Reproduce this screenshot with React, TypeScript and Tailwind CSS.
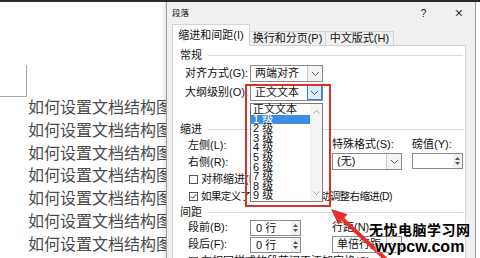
import React from "react"

const lines = Array.from({ length: 7 }, () => "如何设置文档结构图")
const levels = ["2 级", "3 级", "4 级", "5 级", "6 级", "7 级", "8 级", "9 级"]

function Chevron({ color = "#555" }: { color?: string }) {
  return (
    <svg width="9" height="6" viewBox="0 0 9 6">
      <path d="M1 1l3.5 3.5L8 1" fill="none" stroke={color} strokeWidth="1" />
    </svg>
  )
}

function Select({ text, w, focused }: { text: string; w: string; focused?: boolean }) {
  return (
    <div className={`flex h-[17px] ${w} items-stretch border border-[#8a8a8a] bg-white`}>
      <span className="flex-1 pl-[4px] leading-[15px]">{text}</span>
      <span
        className={
          focused
            ? "flex w-[15px] items-center justify-center border border-[#2f7fd0] bg-[#dcecfc]"
            : "flex w-[15px] items-center justify-center border-l border-[#c8c8c8] bg-[#f4f4f4]"
        }
      >
        <Chevron color={focused ? "#2a5f9e" : "#555"} />
      </span>
    </div>
  )
}

function Spin({ text, w }: { text: string; w: string }) {
  return (
    <div className={`flex h-[16px] ${w} items-stretch border border-[#8a8a8a] bg-white`}>
      <span className="flex-1 pl-[5px] leading-[14px]">{text}</span>
      <span className="flex w-[9px] flex-col items-center justify-center gap-[2px] bg-[#f0f0f0]">
        <svg width="5" height="3" viewBox="0 0 5 3">
          <path d="M0 3L2.5 0L5 3Z" fill="#555" />
        </svg>
        <svg width="5" height="3" viewBox="0 0 5 3">
          <path d="M0 0L2.5 3L5 0Z" fill="#555" />
        </svg>
      </span>
    </div>
  )
}

function Check({ checked }: { checked?: boolean }) {
  return (
    <span className="mr-[3px] flex h-[9px] w-[9px] items-center justify-center border border-[#555] bg-white">
      {checked && (
        <svg width="8" height="7" viewBox="0 0 8 7">
          <path d="M1 3.5L3 5.5L7 1" fill="none" stroke="#222" strokeWidth="1.1" />
        </svg>
      )}
    </span>
  )
}

function Group({ title, h }: { title: string; h: string }) {
  return (
    <div className={`flex ${h} items-center pl-[7px] pr-[2px]`}>
      <span>{title}</span>
      <span className="ml-[6px] h-px flex-1 bg-[#dcdcdc]" />
    </div>
  )
}

export default function App() {
  return (
    <div className="relative h-[258px] w-[480px] overflow-hidden border-t-2 border-[#2a2a2a] bg-white font-['Liberation_Sans','Noto_Sans_CJK_SC',sans-serif]">
      {/* page corner mark */}
      <div className="absolute left-0 top-[63px] h-[32px] w-[27px] border-b border-r border-[#a8a8a8]" />

      {/* document text */}
      <div className="pl-[28px] pt-[95px] text-[16px] leading-[22.8px] text-[#4a4a4a]">
        {lines.map((l, i) => (
          <div key={i}>{l}</div>
        ))}
      </div>

      {/* paragraph dialog */}
      <div className="absolute left-[166px] top-0 h-[260px] w-[310px] border-l border-r border-[#a0a0a0] bg-[#f0f0f0] text-[11px] text-[#111] shadow-[-2px_0_4px_rgba(0,0,0,0.12)]">
        <div className="flex h-[22px] items-center pl-[5px]">
          <span className="text-[8.5px]">段落</span>
          <span className="ml-auto w-[20px] text-[10px]">?</span>
          <span className="mr-[12px] ml-[14px] text-[14px] font-light text-[#333]">×</span>
        </div>

        <div className="ml-[5px] flex h-[21px] items-end">
          <div className="relative z-10 -mb-px flex h-[22px] w-[78px] items-center justify-center border border-b-0 border-[#d4d4d4] bg-white">
            缩进和间距(I)
          </div>
          <div className="flex h-[14px] w-[76px] items-center justify-center border border-l-0 border-b-0 border-[#d4d4d4]">
            换行和分页(P)
          </div>
          <div className="flex h-[14px] w-[68px] items-center justify-center border border-l-0 border-b-0 border-[#d4d4d4]">
            中文版式(H)
          </div>
        </div>

        <div className="ml-[5px] h-[220px] w-[294px] border border-[#d4d4d4] bg-white">
          <Group title="常规" h="h-[18px]" />
          <div className="flex h-[19px] items-center">
            <span className="w-[77px] pl-[12px]">对齐方式(G):</span>
            <Select text="两端对齐" w="w-[73px]" />
          </div>
          <div className="flex h-[19px] items-center">
            <span className="w-[77px] pl-[12px]">大纲级别(O):</span>
            <Select text="正文文本" w="w-[73px]" focused />
          </div>
          <div className="h-[19px]" />
          <Group title="缩进" h="h-[16px]" />

          <div className="flex">
            <div className="w-[159px]">
              <div className="flex h-[17px] items-center">
                <span className="w-[77px] pl-[15px]">左侧(L):</span>
                <Spin text="0 字符" w="w-[52px]" />
              </div>
              <div className="flex h-[17px] items-center">
                <span className="w-[77px] pl-[15px]">右侧(R):</span>
                <Spin text="0 字符" w="w-[52px]" />
              </div>
            </div>
            <div className="flex gap-[10px]">
              <div>
                <div className="h-[16px] leading-[14px]">特殊格式(S):</div>
                <Select text="(无)" w="w-[70px]" />
              </div>
              <div>
                <div className="h-[16px] leading-[14px]">磅值(Y):</div>
                <Spin text="" w="w-[51px]" />
              </div>
            </div>
          </div>

          <div className="flex h-[17px] items-center pl-[16px]">
            <Check />
            <span>对称缩进(M)</span>
          </div>
          <div className="flex h-[17px] items-center whitespace-nowrap pl-[16px]">
            <Check checked />
            <span className="text-[10.5px] tracking-[-0.6px]">如果定义了文档网格，则自动调整右缩进(D)</span>
          </div>

          <Group title="间距" h="h-[14px]" />
          <div className="flex">
            <div className="w-[159px]">
              <div className="flex h-[17px] items-center">
                <span className="w-[77px] pl-[15px]">段前(B):</span>
                <Spin text="0 行" w="w-[51px]" />
              </div>
              <div className="flex h-[17px] items-center">
                <span className="w-[77px] pl-[15px]">段后(F):</span>
                <Spin text="0 行" w="w-[51px]" />
              </div>
            </div>
            <div>
              <div className="h-[17px] leading-[17px]">行距(N):</div>
              <Select text="单倍行距" w="w-[70px]" />
            </div>
          </div>
          <div className="flex h-[17px] items-center whitespace-nowrap pl-[16px]">
            <Check />
            <span>在相同样式的段落间不添加空格(C)</span>
          </div>
        </div>
      </div>

      {/* opened drop-down list */}
      <div className="absolute left-[250px] top-[101px] flex h-[99px] w-[73px] border border-[#7a7a7a] bg-white text-[11px] leading-[9.6px] text-[#111]">
        <div className="flex-1 pt-[1px]">
          <div className="pl-[2px]">正文文本</div>
          <div className="bg-[#3d8ee0] pl-[2px] text-white">1 级</div>
          {levels.map((l) => (
            <div key={l} className="pl-[2px]">
              {l}
            </div>
          ))}
        </div>
        <div className="flex w-[12px] flex-col items-center justify-between bg-[#f4f4f4] py-[6px]">
          <svg width="7" height="4" viewBox="0 0 7 4">
            <path d="M0.5 3.5L3.5 0.5L6.5 3.5" fill="none" stroke="#aaa" />
          </svg>
          <svg width="7" height="4" viewBox="0 0 7 4">
            <path d="M0.5 0.5L3.5 3.5L6.5 0.5" fill="none" stroke="#aaa" />
          </svg>
        </div>
      </div>

      {/* red highlight box */}
      <div className="absolute left-[245px] top-[82px] h-[123px] w-[86px] border-2 border-[#d8322c]" />

      {/* red arrow */}
      <svg className="absolute left-[320px] top-[195px]" width="80" height="63" viewBox="0 0 80 63">
        <path d="M23 22.5L70 66" stroke="#e0312c" strokeWidth="4" />
        <path d="M11 12L18.4 27.8L27.6 17.2Z" fill="#e0312c" />
      </svg>

      {/* watermark */}
      <div className="absolute left-[369px] top-[219px] flex flex-col items-center font-bold text-black [text-shadow:0_0_2px_#fff,0_0_2px_#fff]">
        <span className="text-[14px] leading-[18px] tracking-[0.5px]">无忧电脑学习网</span>
        <span className="-mt-[1px] text-[16px] leading-[18px]">wypcw.com</span>
      </div>
    </div>
  )
}
